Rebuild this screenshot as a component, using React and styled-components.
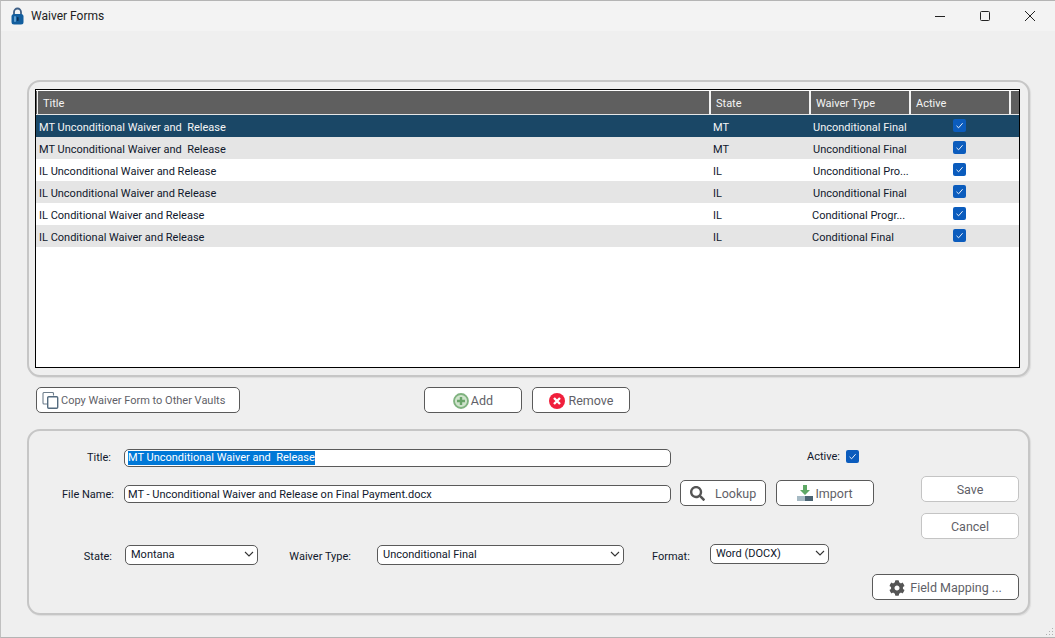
import React from 'react';
import styled, { createGlobalStyle } from 'styled-components';
import { FaCog, FaSearch } from 'react-icons/fa';

const GlobalStyle = createGlobalStyle`
  html, body {
    margin: 0;
    padding: 0;
    background: #efefef;
    overflow: hidden;
  }
  * {
    box-sizing: border-box;
  }
`;

const Window = styled.div`
  position: relative;
  width: 1055px;
  height: 638px;
  background: #efefef;
  border-top: 1px solid #b4b4b4;
  border-left: 1px solid #c0c0c0;
  border-bottom: 1px solid #b4b4b4;
  font-family: Roboto, 'Noto Sans', sans-serif;
  font-size: 11px;
  color: #10182c;
  overflow: hidden;
`;

const EdgeMark = styled.div`
  position: absolute;
  left: -1px;
  top: 54px;
  width: 1px;
  height: 22px;
  background: #35688c;
`;

const TitleBar = styled.div`
  display: flex;
  align-items: center;
  height: 30px;
  padding-left: 10px;
  background: #f3f3f3;
`;

const TitleText = styled.span`
  margin-left: 7px;
  font-size: 12px;
  color: #222;
`;

const WindowControls = styled.div`
  display: flex;
  align-items: center;
  margin-left: auto;
  padding-right: 20px;
  gap: 35px;
`;

const Panel = styled.section`
  width: 1003px;
  height: ${(p) => p.$height}px;
  margin-left: 26px;
  border: 2px solid #c6c6c6;
  border-radius: 13px;
  background: #efefef;
  box-shadow: 1px 1px 1px #dcdcdc;
`;

const ListPanel = styled(Panel)`
  margin-top: 49px;
  padding: 7px 6px;
`;

const Grid = styled.div`
  width: 985px;
  height: 279px;
  border: 1px solid #000;
  background: #fff;
`;

const HeaderRow = styled.div`
  display: grid;
  grid-template-columns: 674px 100px 100px 100px 1fr;
  height: 24px;
  margin-top: 1px;
  background: #5f5f5f;
  border-bottom: 1px solid #e6e6e6;
`;

const HeaderCell = styled.div`
  display: flex;
  align-items: center;
  padding: 2px 0 0 5px;
  border-left: ${(p) => (p.$first ? '1px solid #f2f2f2' : '2px solid #f2f2f2')};
  margin-left: ${(p) => (p.$first ? 1 : -1)}px;
  color: #f4f4f4;
`;

const Row = styled.div`
  display: grid;
  grid-template-columns: 674px 100px 100px 98px 1fr;
  height: 22px;
  align-items: center;
  white-space: pre;
  background: ${(p) => (p.$selected ? '#1a4766' : p.$alt ? '#e5e5e5' : '#fff')};
  color: ${(p) => (p.$selected ? '#f5f5f5' : '#10182c')};
`;

const Cell = styled.div`
  padding: 3px 0 0 ${(p) => p.$pad ?? 3}px;
`;

const CheckCell = styled.div`
  display: flex;
  justify-content: center;
  padding-bottom: 2px;
`;

const CheckBox = styled.span`
  display: inline-flex;
  align-items: center;
  justify-content: center;
  width: 13px;
  height: 13px;
  border-radius: 2px;
  background: #0b5cbd;
`;

const ActionRow = styled.div`
  display: flex;
  margin: 10px 0 16px 35px;
`;

const Button = styled.button`
  display: flex;
  align-items: center;
  justify-content: ${(p) => p.$justify || 'center'};
  gap: ${(p) => p.$gap ?? 3}px;
  width: ${(p) => p.$width}px;
  height: 26px;
  margin-left: ${(p) => p.$left || 0}px;
  padding: 1px ${(p) => p.$pad || 0}px 0;
  border: 1px solid ${(p) => (p.$soft ? '#c4c4c4' : '#5a5a5a')};
  border-radius: 5px;
  background: #fff;
  color: #5f5f68;
  font-family: inherit;
  font-size: ${(p) => p.$size || 12.5}px;
  white-space: nowrap;

  svg {
    flex-shrink: 0;
  }
`;

const FormPanel = styled(Panel)`
  padding: 18px 9px 0 0;
`;

const FormTop = styled.div`
  display: flex;
  justify-content: space-between;
`;

const FormLeft = styled.div`
  width: 885px;
`;

const FormRow = styled.div`
  display: flex;
  align-items: flex-start;
  margin-top: ${(p) => p.$top || 0}px;
`;

const Label = styled.div`
  width: ${(p) => p.$width}px;
  margin-left: ${(p) => p.$left || 0}px;
  margin-top: ${(p) => p.$down || 0}px;
  text-align: right;
  white-space: nowrap;
  line-height: 16px;
`;

const Field = styled.div`
  display: flex;
  align-items: center;
  width: 547px;
  height: 18px;
  margin-left: ${(p) => p.$left ?? 13}px;
  margin-top: ${(p) => p.$down || 0}px;
  padding-left: 3px;
  border: 1px solid #5a5a5a;
  border-radius: 5px;
  background: #fff;
  white-space: pre;
`;

const Highlight = styled.span`
  background: #0078d7;
  color: #fff;
  line-height: 14px;
`;

const Dropdown = styled.div`
  display: flex;
  align-items: center;
  justify-content: space-between;
  width: ${(p) => p.$width}px;
  height: 20px;
  margin-left: ${(p) => p.$left}px;
  margin-top: ${(p) => p.$down || 0}px;
  padding: 0 3px 2px 5px;
  border: 1px solid #5a5a5a;
  border-radius: 5px;
  background: #fff;
`;

const FormRight = styled.div`
  display: flex;
  flex-direction: column;
  gap: 11px;
  padding-top: 27px;
`;

const FormBottom = styled.div`
  display: flex;
  justify-content: flex-end;
  margin-top: 9px;
`;

const ActiveCheck = styled(CheckBox)`
  margin-left: 6px;
  margin-top: 1px;
`;

const Grip = styled.svg`
  position: absolute;
  right: 1px;
  bottom: 1px;
`;

const rows = [
  ['MT Unconditional Waiver and  Release', 'MT', 'Unconditional Final', 3],
  ['MT Unconditional Waiver and  Release', 'MT', 'Unconditional Final', 3],
  ['IL Unconditional Waiver and Release', 'IL', 'Unconditional Pro...', 3],
  ['IL Unconditional Waiver and Release', 'IL', 'Unconditional Final', 3],
  ['IL Conditional Waiver and Release', 'IL', 'Conditional Progr...', 2],
  ['IL Conditional Waiver and Release', 'IL', 'Conditional Final', 2],
];

const Check = () => (
  <svg width="9" height="9" viewBox="0 0 9 9">
    <path d="M1.5 4.8 L3.6 6.8 L7.6 2.2" fill="none" stroke="#e8f0fa" strokeWidth="1" />
  </svg>
);

const Chevron = () => (
  <svg width="10" height="6" viewBox="0 0 10 6">
    <path d="M1 1 L5 5 L9 1" fill="none" stroke="#333" strokeWidth="1.1" />
  </svg>
);

const LockIcon = () => (
  <svg width="13" height="18" viewBox="0 0 13 18">
    <path d="M3 8 V5 a3.5 3.5 0 0 1 7 0 V8" fill="none" stroke="#3d5f86" strokeWidth="1.8" />
    <rect x="0.5" y="7" width="12" height="10.5" rx="2.5" fill="#125e9e" />
    <rect x="3" y="9" width="2" height="6" rx="1" fill="#5f9fd0" />
    <rect x="6" y="10" width="1.6" height="4" rx="0.8" fill="#0a2f55" />
  </svg>
);

const CopyIcon = () => (
  <svg width="17" height="17" viewBox="0 0 17 17">
    <path d="M11.5 3.5 V1.5 a1 1 0 0 0 -1 -1 H2 a1 1 0 0 0 -1 1 V11 a1 1 0 0 0 1 1 H5" fill="none" stroke="#6f7f8d" strokeWidth="1.1" />
    <rect x="5.7" y="4.7" width="10" height="11.6" rx="1" fill="none" stroke="#546b7f" strokeWidth="1.4" />
  </svg>
);

const AddIcon = () => (
  <svg width="16" height="16" viewBox="0 0 16 16">
    <circle cx="8" cy="8" r="7" fill="#cfe3cc" stroke="#7fb27f" strokeWidth="1.8" />
    <path d="M8 4 V12 M4 8 H12" stroke="#6aa56a" strokeWidth="2.4" />
  </svg>
);

const RemoveIcon = () => (
  <svg width="16" height="16" viewBox="0 0 16 16">
    <circle cx="8" cy="8" r="8" fill="#f01f3c" />
    <path d="M5 5 L11 11 M11 5 L5 11" stroke="#fff" strokeWidth="2.4" />
  </svg>
);

const ImportIcon = () => (
  <svg width="16" height="17" viewBox="0 0 16 17">
    <path d="M6 0 H10 V5 H13 L8 10 L3 5 H6 Z" fill="#5ea865" />
    <rect x="0" y="11" width="8" height="5" fill="#a6bac4" />
    <rect x="8" y="11" width="8" height="5" fill="#4b6472" />
  </svg>
);

const App = () => (
  <Window>
    <GlobalStyle />
    <EdgeMark />
    <TitleBar>
      <LockIcon />
      <TitleText>Waiver Forms</TitleText>
      <WindowControls>
        <svg width="10" height="10" viewBox="0 0 10 10">
          <path d="M0 5.5 H10" stroke="#222" />
        </svg>
        <svg width="10" height="10" viewBox="0 0 10 10">
          <rect x="0.5" y="0.5" width="9" height="9" rx="1" fill="none" stroke="#222" />
        </svg>
        <svg width="10" height="10" viewBox="0 0 10 10">
          <path d="M0 0 L10 10 M10 0 L0 10" stroke="#222" />
        </svg>
      </WindowControls>
    </TitleBar>

    <ListPanel $height={297}>
      <Grid>
        <HeaderRow>
          <HeaderCell $first>Title</HeaderCell>
          <HeaderCell>State</HeaderCell>
          <HeaderCell>Waiver Type</HeaderCell>
          <HeaderCell>Active</HeaderCell>
          <HeaderCell />
        </HeaderRow>
        {rows.map(([title, state, type, pad], i) => (
          <Row key={i} $selected={i === 0} $alt={i % 2 === 1}>
            <Cell>{title}</Cell>
            <Cell>{state}</Cell>
            <Cell $pad={pad}>{type}</Cell>
            <CheckCell>
              <CheckBox>
                <Check />
              </CheckBox>
            </CheckCell>
          </Row>
        ))}
      </Grid>
    </ListPanel>

    <ActionRow>
      <Button $width={204} $justify="flex-start" $pad={5} $gap={2} $size={11}>
        <CopyIcon />
        Copy Waiver Form to Other Vaults
      </Button>
      <Button $width={98} $left={184} $gap={2}>
        <AddIcon />
        Add
      </Button>
      <Button $width={98} $left={10} $gap={4}>
        <RemoveIcon />
        Remove
      </Button>
    </ActionRow>

    <FormPanel $height={186}>
      <FormTop>
        <FormLeft>
          <FormRow>
            <Label $width={82} $down={1}>Title:</Label>
            <Field>
              <Highlight>MT Unconditional Waiver and  Release</Highlight>
            </Field>
            <Label $width={33} $left={136}>Active:</Label>
            <ActiveCheck>
              <Check />
            </ActiveCheck>
          </FormRow>
          <FormRow $top={13}>
            <Label $width={85} $down={7}>File Name:</Label>
            <Field $down={5} $left={10}>
              MT - Unconditional Waiver and Release on Final Payment.docx
            </Field>
            <Button $width={86} $left={9} $justify="flex-start" $gap={10} $pad={9}>
              <FaSearch size={15} color="#555" />
              Lookup
            </Button>
            <Button $width={98} $left={10} $gap={2}>
              <ImportIcon />
              Import
            </Button>
          </FormRow>
          <FormRow $top={38}>
            <Label $width={83} $down={5}>State:</Label>
            <Dropdown $width={133} $left={13} $down={1}>
              Montana
              <Chevron />
            </Dropdown>
            <Label $width={64} $left={29} $down={5}>Waiver Type:</Label>
            <Dropdown $width={247} $left={26} $down={1}>
              Unconditional Final
              <Chevron />
            </Dropdown>
            <Label $width={35} $left={28} $down={5}>Format:</Label>
            <Dropdown $width={119} $left={23}>
              Word (DOCX)
              <Chevron />
            </Dropdown>
          </FormRow>
        </FormLeft>
        <FormRight>
          <Button $width={98} $soft>Save</Button>
          <Button $width={98} $soft>Cancel</Button>
        </FormRight>
      </FormTop>
      <FormBottom>
        <Button $width={147} $gap={5}>
          <FaCog size={16} color="#555" />
          Field Mapping ...
        </Button>
      </FormBottom>
    </FormPanel>

    <Grip width="9" height="9" viewBox="0 0 9 9">
      <path d="M7 1h1v1H7zM4 4h1v1H4zM7 4h1v1H7zM1 7h1v1H1zM4 7h1v1H4zM7 7h1v1H7z" fill="#b0b0b0" />
    </Grip>
  </Window>
);

export default App;
